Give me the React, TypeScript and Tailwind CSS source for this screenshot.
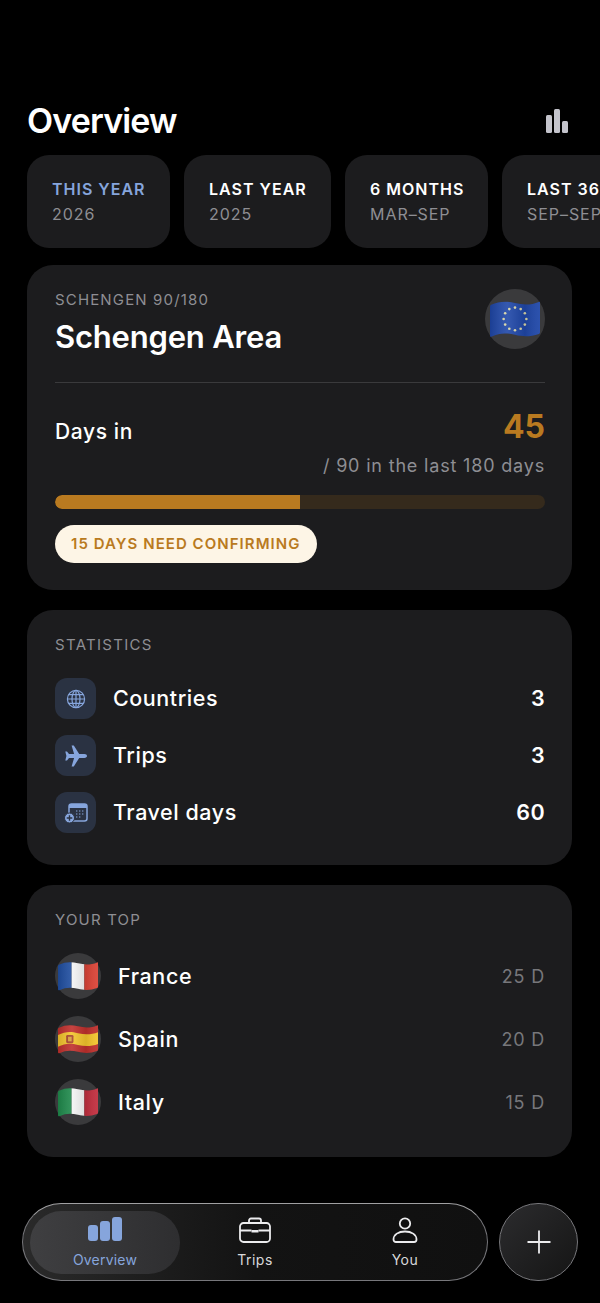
import React from 'react';

const FLAG_SHAPE = 'M1 5 C8 2 14 1.5 22 3.5 C30 5.5 37 5 43 2.5 C43.8 2.2 44 2.6 44 3.2 L44 29 C44 30 43.6 30.4 43 30.7 C36 33 30 33.5 22 31.5 C14 29.5 8 30 1.5 33 C0.6 33.3 0 33 0 32 L0 6.5 C0 5.8 0.4 5.3 1 5 Z';

const Flag: React.FC<{ id: string; children: React.ReactNode; className?: string }> = ({ id, children, className }) => (
    <svg viewBox="0 0 44 36" className={className}>
        <defs>
            <clipPath id={id}>
                <path d={FLAG_SHAPE} />
            </clipPath>
            <linearGradient id={`${id}-shade`} x1="0" y1="0" x2="1" y2="0">
                <stop offset="0" stopColor="#000" stopOpacity="0.12" />
                <stop offset="0.35" stopColor="#fff" stopOpacity="0.1" />
                <stop offset="0.7" stopColor="#000" stopOpacity="0.1" />
                <stop offset="1" stopColor="#fff" stopOpacity="0.06" />
            </linearGradient>
        </defs>
        <g clipPath={`url(#${id})`}>
            {children}
            <rect width="44" height="36" fill={`url(#${id}-shade)`} />
        </g>
    </svg>
);

const EuFlag = () => {
    const stars = Array.from({ length: 12 }, (_, i) => {
        const a = (i * Math.PI) / 6;
        return { x: 22 + 10 * Math.sin(a), y: 17.5 - 10 * Math.cos(a) };
    });
    return (
        <Flag id="eu" className="w-[50px] h-[41px]">
            <rect width="44" height="36" fill="#1f47a8" />
            {stars.map((s, i) => (
                <circle key={i} cx={s.x} cy={s.y} r="1.15" fill="#d9d6a8" />
            ))}
        </Flag>
    );
};

const FranceFlag = () => (
    <Flag id="fr" className="w-10 h-[33px]">
        <rect width="15" height="36" fill="#1f4ea1" />
        <rect x="15" width="14" height="36" fill="#f4f4f4" />
        <rect x="29" width="15" height="36" fill="#dc4437" />
    </Flag>
);

const SpainFlag = () => (
    <Flag id="es" className="w-10 h-[33px]">
        <rect width="44" height="36" fill="#bf2f2c" />
        <path d="M0 13 C8 9 14 9 22 11 C30 13 37 12.5 44 10 L44 23 C37 25.5 30 26 22 24 C14 22 8 22 0 26 Z" fill="#f3c42c" />
        <rect x="9" y="13" width="8" height="9" rx="1.5" fill="#a8442a" />
        <rect x="11" y="15" width="4" height="5" fill="#d9a13a" />
    </Flag>
);

const ItalyFlag = () => (
    <Flag id="it" className="w-10 h-[33px]">
        <rect width="15" height="36" fill="#1f8a4c" />
        <rect x="15" width="14" height="36" fill="#f4f4f4" />
        <rect x="29" width="15" height="36" fill="#c22f3f" />
    </Flag>
);

const GlobeIcon = () => (
    <svg viewBox="0 0 20 20" className="w-5 h-5" fill="none" stroke="#86a5dc" strokeWidth="1.2">
        <circle cx="10" cy="10" r="8.6" />
        <ellipse cx="10" cy="10" rx="4" ry="8.6" />
        <path d="M10 1.4v17.2M1.4 10h17.2M2.6 5.7h14.8M2.6 14.3h14.8" />
    </svg>
);

const PlaneIcon = () => (
    <svg viewBox="0 0 24 24" className="w-[24px] h-[24px]" fill="#86a5dc">
        <path d="M23 12c0-1-1-1.9-2.6-1.9h-5.2L9.8 1.6H7.6l2.5 8.5H5L3 7.4H1.3l1.1 4.6-1.1 4.6H3L5 13.9h5.1l-2.5 8.5h2.2l5.4-8.5h5.2C22 13.9 23 13 23 12z" />
    </svg>
);

const CalendarPlusIcon = () => (
    <svg viewBox="0 0 24 24" className="w-6 h-6">
        <rect x="5" y="3" width="18" height="17" rx="2.5" fill="none" stroke="#86a5dc" strokeWidth="1.5" />
        <path d="M5 5.5a2.5 2.5 0 0 1 2.5-2.5h13A2.500 2.500 0 0 1 23 5.500V7H5z" fill="#86a5dc" />
        <path d="M12 10h1.4M15 10h1.4M18 10h1.4M12 13h1.4M15 13h1.4M18 13h1.4M12 16h1.4M15 16h1.4" stroke="#86a5dc" strokeWidth="1" />
        <circle cx="5.5" cy="17" r="5" fill="#86a5dc" stroke="#2a3242" strokeWidth="1" />
        <path d="M5.5 14.2v5.6M2.7 17h5.6" stroke="#2a3242" strokeWidth="1.4" />
    </svg>
);

const chips = [
    { title: 'THIS YEAR', sub: '2026', width: 'w-[143px]', active: true },
    { title: 'LAST YEAR', sub: '2025', width: 'w-[147px]', active: false },
    { title: '6 MONTHS', sub: 'MAR–SEP', width: 'w-[143px]', active: false },
    { title: 'LAST 365 DAYS', sub: 'SEP–SEP', width: 'w-[180px]', active: false },
];

const stats = [
    { label: 'Countries', value: 3, icon: <GlobeIcon /> },
    { label: 'Trips', value: 3, icon: <PlaneIcon /> },
    { label: 'Travel days', value: 60, icon: <CalendarPlusIcon /> },
];

const top = [
    { name: 'France', days: '25 D', flag: <FranceFlag /> },
    { name: 'Spain', days: '20 D', flag: <SpainFlag /> },
    { name: 'Italy', days: '15 D', flag: <ItalyFlag /> },
];

const App: React.FC = () => {
    return (
        <div className="w-[600px] h-[1303px] bg-black text-white overflow-hidden font-['Inter',sans-serif]">
            <div className="pt-[99px] pl-[27px] pr-[28px]">
                <div className="flex justify-between items-center h-[44px]">
                    <h1 className="text-[34px] font-semibold tracking-[-0.85px] leading-[44px]">Overview</h1>
                    <svg viewBox="0 0 24 24" className="w-[24px] h-[24px] mr-[3px]" fill="#c4c4cc">
                        <rect x="1" y="6" width="6" height="18" rx="1.5" />
                        <rect x="9" y="0" width="6" height="24" rx="1.5" />
                        <rect x="17" y="12" width="6" height="12" rx="1.5" />
                    </svg>
                </div>

                <div className="flex gap-[14px] mt-[12px] mr-[-28px] overflow-hidden">
                    {chips.map((c) => (
                        <div key={c.title} className={`${c.width} h-[93px] shrink-0 rounded-[22px] bg-[#1c1c1e] pl-[25px] pt-[24px]`}>
                            <div className={`text-[16px] leading-[20px] font-semibold tracking-[1px] whitespace-nowrap ${c.active ? 'text-[#86a5dc]' : 'text-white'}`}>{c.title}</div>
                            <div className="text-[16px] leading-[20px] mt-[5px] tracking-[0.95px] text-[#8e8e93] whitespace-nowrap">{c.sub}</div>
                        </div>
                    ))}
                </div>

                <section className="mt-[17px] h-[325px] rounded-[26px] bg-[#1c1c1e] pl-[28px] pr-[27px] pt-[25px]">
                    <div className="flex justify-between h-[93px] border-b border-[#3a3a3c]">
                        <div>
                            <div className="text-[15px] leading-[20px] tracking-[1.15px] text-[#8e8e93]">SCHENGEN 90/180</div>
                            <h2 className="text-[31px] leading-[38px] font-semibold tracking-[-0.2px] mt-[8px]">Schengen Area</h2>
                        </div>
                        <div className="w-[60px] h-[60px] -mt-px rounded-full bg-[#3a3a3c] flex items-center justify-center">
                            <EuFlag />
                        </div>
                    </div>
                    <div className="flex justify-between items-center mt-[24px] h-[40px]">
                        <span className="text-[21px] font-medium tracking-[0.6px] pt-[9px]">Days in</span>
                        <span className="text-[32px] font-bold text-[#b97a20]">45</span>
                    </div>
                    <div className="text-right text-[18px] leading-[24px] tracking-[0.82px] text-[#8e8e93] mt-[7px]">/ 90 in the last 180 days</div>
                    <div className="mt-[17px] h-[14px] rounded-full bg-[#352a1c] overflow-hidden">
                        <div className="h-full w-1/2 bg-[#b97a20] rounded-l-full" />
                    </div>
                    <div className="mt-[16px] inline-flex items-center h-[38px] pl-[16px] pr-[17px] rounded-full bg-[#fdf5e6] text-[#b97a20] text-[15px] font-semibold tracking-[1.05px] whitespace-nowrap">
                        15 DAYS NEED CONFIRMING
                    </div>
                </section>

                <section className="mt-[20px] h-[255px] rounded-[26px] bg-[#1c1c1e] pl-[28px] pr-[27px] pt-[25px]">
                    <div className="text-[15px] leading-[20px] tracking-[1.3px] text-[#8e8e93]">STATISTICS</div>
                    <div className="mt-[23px] flex flex-col gap-[16px]">
                        {stats.map((s) => (
                            <div key={s.label} className="flex items-center h-[41px]">
                                <div className="w-[41px] h-[41px] rounded-[12px] bg-[#2a3242] flex items-center justify-center">{s.icon}</div>
                                <span className="ml-[17px] text-[21.5px] font-medium tracking-[0.55px]">{s.label}</span>
                                <span className="ml-auto text-[21.5px] font-semibold tracking-[0.4px]">{s.value}</span>
                            </div>
                        ))}
                    </div>
                </section>

                <section className="mt-[20px] h-[272px] rounded-[26px] bg-[#1c1c1e] pl-[28px] pr-[27px] pt-[25px]">
                    <div className="text-[15px] leading-[20px] tracking-[1.2px] text-[#8e8e93]">YOUR TOP</div>
                    <div className="mt-[23px] flex flex-col gap-[17px]">
                        {top.map((t) => (
                            <div key={t.name} className="flex items-center h-[46px]">
                                <div className="w-[46px] h-[46px] rounded-full bg-[#3a3a3c] flex items-center justify-center">{t.flag}</div>
                                <span className="ml-[17px] text-[21.5px] font-medium tracking-[0.6px]">{t.name}</span>
                                <span className="ml-auto text-[18px] tracking-[0.8px] text-[#77777b]">{t.days}</span>
                            </div>
                        ))}
                    </div>
                </section>
            </div>

            <nav className="flex gap-[11px] mt-[46px] ml-[22px]">
                <div className="w-[466px] h-[78px] rounded-full border border-[#77777b] border-t-[#a0a0a2] bg-gradient-to-r from-[#2a2a2a] via-[#131313] to-[#101010] p-[7px] flex items-center">
                    <div className="w-[150px] h-[63px] rounded-full pt-[2px] bg-gradient-to-r from-[#3f3f41] to-[#2e2e30] flex flex-col items-center justify-center text-[#86a5dc]">
                        <svg viewBox="0 0 34 24" className="w-[34px] h-[24px]" fill="#86a5dc">
                            <rect x="0" y="8" width="10" height="16" rx="3" />
                            <rect x="12" y="4" width="10" height="20" rx="3" />
                            <rect x="24" y="0" width="10" height="24" rx="3" />
                        </svg>
                        <span className="text-[14px] leading-[18px] tracking-[0.2px] mt-[10px]">Overview</span>
                    </div>
                    <div className="w-[150px] pt-[2px] flex flex-col items-center text-[#d8d8da]">
                        <svg viewBox="0 0 32 26" className="w-[32px] h-[26px]" fill="none" stroke="#ececee" strokeWidth="1.8">
                            <rect x="1" y="6" width="30" height="19" rx="3.5" />
                            <path d="M10 6V3.500A2 2 0 0 1 12 1.500h8a2 2 0 0 1 2 2V6M1 13.500h11.500M19.500 13.500H31" />
                            <path d="M12.500 13h7v2.500h-7z" fill="#ececee" stroke="none" />
                        </svg>
                        <span className="text-[14px] leading-[18px] tracking-[0.5px] mt-[8px]">Trips</span>
                    </div>
                    <div className="w-[150px] pt-[2px] flex flex-col items-center text-[#d8d8da]">
                        <svg viewBox="0 0 26 26" className="w-[26px] h-[26px]" fill="none" stroke="#ececee" strokeWidth="1.8">
                            <circle cx="13" cy="6.500" r="5.200" />
                            <path d="M1.500 22.500c0-5 5-8 11.500-8s11.500 3 11.500 8c0 1.500-1 2.500-2.500 2.500H4c-1.500 0-2.500-1-2.500-2.500z" />
                        </svg>
                        <span className="text-[14px] leading-[18px] tracking-[0.5px] mt-[8px]">You</span>
                    </div>
                </div>
                <div className="w-[79px] h-[78px] rounded-full border border-[#77777b] bg-gradient-to-br from-[#2c2c2e] to-[#151515] flex items-center justify-center">
                    <svg viewBox="0 0 24 24" className="w-[24px] h-[24px]" fill="none" stroke="#ececee" strokeWidth="1.8">
                        <path d="M12 0.500v23M0.500 12h23" />
                    </svg>
                </div>
            </nav>
        </div>
    );
};

export default App;
